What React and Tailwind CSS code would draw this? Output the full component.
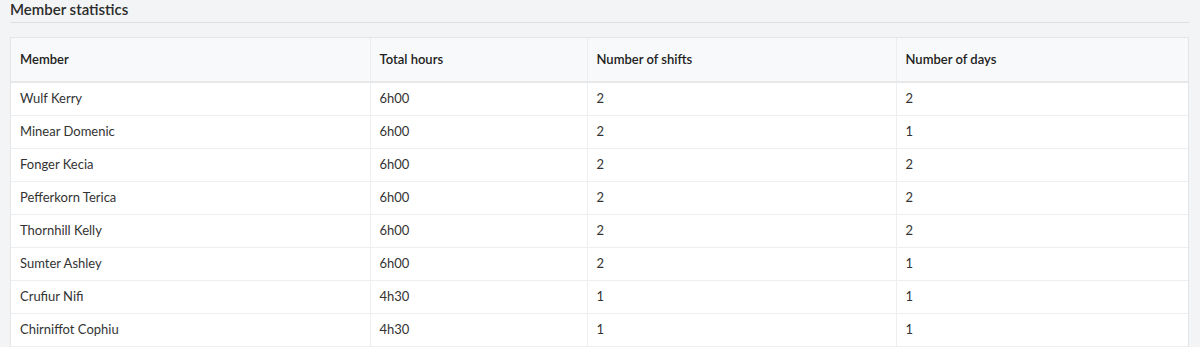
const rows = [
  ['Wulf Kerry', '6h00', '2', '2'],
  ['Minear Domenic', '6h00', '2', '1'],
  ['Fonger Kecia', '6h00', '2', '2'],
  ['Pefferkorn Terica', '6h00', '2', '2'],
  ['Thornhill Kelly', '6h00', '2', '2'],
  ['Sumter Ashley', '6h00', '2', '1'],
  ['Crufiur Nifi', '4h30', '1', '1'],
  ['Chirniffot Cophiu', '4h30', '1', '1'],
];

export default function App() {
  return (
    <div className="min-h-[347px] bg-[#f3f4f5] pl-[10px] pr-[11px] text-[#333] [font-family:Lato,'Noto_Sans',sans-serif]">
      {/* Section title */}
      <div className="border-b border-[#dcdee0] pb-[3px]">
        <h2 className="text-[15px] font-semibold leading-[19px] text-[#2b2b2b]">Member statistics</h2>
      </div>

      {/* Stats table */}
      <div className="mt-[14px] overflow-hidden border border-[#e3e5e7] bg-white">
        <table className="w-full table-fixed border-collapse text-[13px]">
          <colgroup>
            <col className="w-[359px]" />
            <col className="w-[217px]" />
            <col className="w-[309px]" />
            <col />
          </colgroup>
          <thead>
            <tr className="h-[44px] border-b-2 border-[#e6e8ea] bg-[#f8f9fa] text-left">
              <th className="px-[9px] font-semibold text-[#222]">Member</th>
              <th className="border-l border-[#eceef0] px-[9px] font-semibold text-[#222]">Total hours</th>
              <th className="border-l border-[#eceef0] px-[9px] font-semibold text-[#222]">Number of shifts</th>
              <th className="border-l border-[#eceef0] px-[9px] font-semibold text-[#222]">Number of days</th>
            </tr>
          </thead>
          <tbody>
            {rows.map((r) => (
              <tr key={r[0]} className="h-[33px] border-b border-[#eceef0]">
                <td className="px-[9px]">{r[0]}</td>
                <td className="border-l border-[#eceef0] px-[9px]">{r[1]}</td>
                <td className="border-l border-[#eceef0] px-[9px]">{r[2]}</td>
                <td className="border-l border-[#eceef0] px-[9px]">{r[3]}</td>
              </tr>
            ))}
          </tbody>
        </table>
      </div>
    </div>
  );
}
